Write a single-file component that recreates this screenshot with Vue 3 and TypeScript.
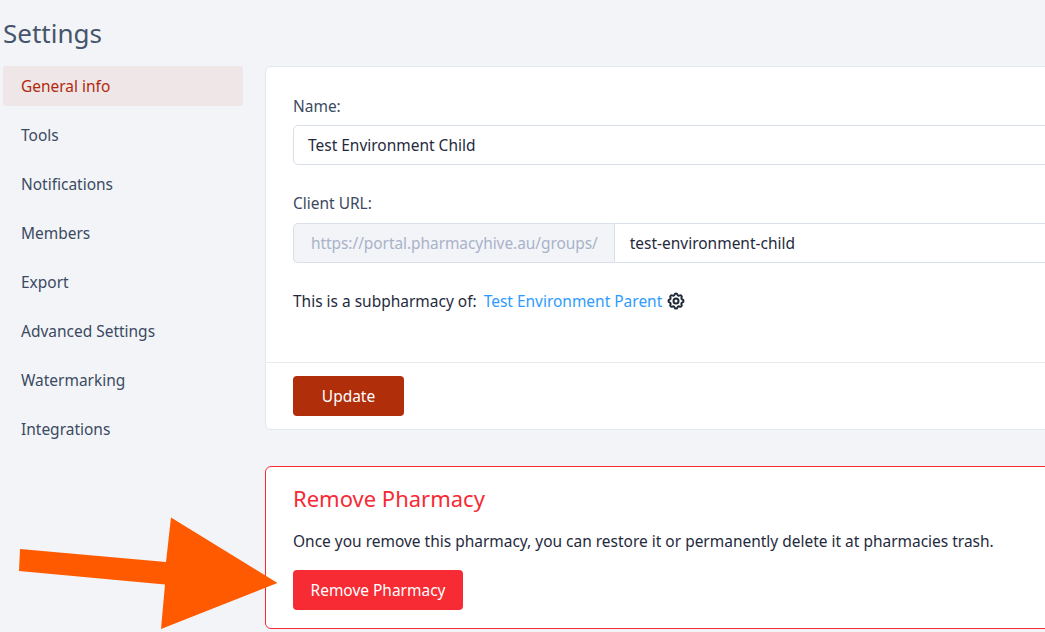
<template>
  <div class="page">
    <h1 class="title">Settings</h1>
    <div class="layout">
      <nav class="side">
        <a
          v-for="item in menu"
          :key="item"
          class="side-item"
          :class="{ active: item === current }"
        >{{ item }}</a>
      </nav>
      <main class="content">
        <section class="card">
          <div class="card-body">
            <label class="label">Name:</label>
            <div class="input">Test Environment Child</div>
            <label class="label label-url">Client URL:</label>
            <div class="group">
              <span class="prefix">https://portal.pharmacyhive.au/groups/</span>
              <div class="input input-joined">test-environment-child</div>
            </div>
            <p class="sub">
              This is a subpharmacy of:
              <a class="link">Test Environment Parent</a>
              <svg class="gear" viewBox="0 0 24 24" fill="none" stroke="#1f2937" stroke-width="2.4" stroke-linecap="round" stroke-linejoin="round">
                <path d="M10.3 4.3c.4-1.8 3-1.8 3.4 0a1.7 1.7 0 0 0 2.6 1.1c1.5-.9 3.3.8 2.4 2.4a1.7 1.7 0 0 0 1 2.5c1.8.4 1.8 3 0 3.4a1.7 1.7 0 0 0-1 2.6c.9 1.5-.9 3.3-2.4 2.4a1.7 1.7 0 0 0-2.6 1c-.4 1.8-3 1.8-3.4 0a1.7 1.7 0 0 0-2.6-1c-1.5.9-3.3-.9-2.4-2.4a1.7 1.7 0 0 0-1-2.6c-1.8-.4-1.8-3 0-3.4a1.7 1.7 0 0 0 1-2.5c-.9-1.6.9-3.3 2.4-2.4a1.7 1.7 0 0 0 2.6-1.1z" />
                <circle cx="12" cy="12" r="3" />
              </svg>
            </p>
          </div>
          <div class="card-foot">
            <button class="btn btn-update">Update</button>
          </div>
        </section>
        <section class="card card-danger">
          <h2 class="danger-title">Remove Pharmacy</h2>
          <p class="danger-text">Once you remove this pharmacy, you can restore it or permanently delete it at pharmacies trash.</p>
          <button class="btn btn-remove">Remove Pharmacy</button>
        </section>
      </main>
    </div>
    <!-- annotation drawn on top of the screenshot -->
    <svg class="arrow" width="1045" height="632" viewBox="0 0 1045 632">
      <polygon points="20,549 166,562 171,517.5 277.5,583 161,629 165,584.5 19,571" fill="#ff5a00" />
    </svg>
  </div>
</template>

<script setup lang="ts">
const menu: string[] = [
  'General info',
  'Tools',
  'Notifications',
  'Members',
  'Export',
  'Advanced Settings',
  'Watermarking',
  'Integrations',
]
const current = 'General info'
</script>

<style>
html,
body {
  margin: 0;
  background: #f2f4f8;
  overflow: hidden;
}
</style>

<style scoped>
.page {
  position: relative;
  width: 1045px;
  height: 632px;
  overflow: hidden;
  padding: 15px 0 0 3px;
  box-sizing: border-box;
  background: #f2f4f8;
  font-family: 'Noto Sans', sans-serif;
  font-size: 15.47px;
  color: #2d3a53;
}

.title {
  margin: 0 0 14px;
  font-size: 26px;
  font-weight: 400;
  line-height: 37px;
  color: #46556c;
}

.layout {
  display: flex;
  gap: 22px;
  align-items: flex-start;
}

.side {
  width: 240px;
  flex: none;
  display: flex;
  flex-direction: column;
  gap: 9px;
}

.side-item {
  height: 40px;
  line-height: 40px;
  padding-left: 18px;
  border-radius: 3px;
  color: #3b4a61;
}

.side-item.active {
  background: #eee6e7;
  color: #b12a0d;
}

.content {
  width: 1000px;
  flex: none;
}

.card {
  background: #fff;
  border: 1px solid #e4e7f0;
  border-radius: 6px;
}

.card-body {
  padding: 27px 27px 0;
  height: 295px;
  box-sizing: border-box;
}

.label {
  display: block;
  line-height: 24px;
  margin-bottom: 7px;
  color: #3b4a61;
}

.label-url {
  margin-top: 26px;
  margin-bottom: 8px;
}

.input {
  height: 40px;
  line-height: 38px;
  box-sizing: border-box;
  padding: 0 14px;
  background: #fff;
  border: 1px solid #d9deeb;
  border-radius: 5px;
  color: #1f2a3d;
}

.group {
  display: flex;
}

.prefix {
  height: 40px;
  line-height: 38px;
  box-sizing: border-box;
  padding: 0 16px 0 17px;
  background: #f2f4f8;
  border: 1px solid #d9deeb;
  border-right: 0;
  border-radius: 5px 0 0 5px;
  color: #a9b2c8;
  white-space: nowrap;
  letter-spacing: -0.06px;
}

.input-joined {
  flex: 1;
  padding: 0 15px;
  border-radius: 0 5px 5px 0;
}

.sub {
  display: flex;
  align-items: center;
  margin: 26px 0 0;
  line-height: 24px;
  color: #1f2a3d;
}

.link {
  margin-left: 7px;
  color: #2e9bff;
}

.gear {
  width: 20px;
  height: 20px;
  margin-left: 4px;
}

.card-foot {
  border-top: 1px solid #e9ebf1;
  padding: 13px 27px;
}

.btn {
  display: block;
  height: 40px;
  border: 0;
  border-radius: 4px;
  color: #fff;
  font-family: inherit;
  font-size: 15.47px;
}

.btn-update {
  width: 111px;
  background: #b12e0b;
}

.card-danger {
  margin-top: 36px;
  height: 163px;
  box-sizing: border-box;
  padding: 16px 27px 0;
  border-color: #f62b33;
}

.danger-title {
  margin: 0;
  font-size: 22px;
  font-weight: 400;
  line-height: 30px;
  color: #f62b33;
}

.danger-text {
  margin: 16px 0 0;
  line-height: 24px;
  color: #1f2a3d;
}

.btn-remove {
  width: 170px;
  margin-top: 17px;
  background: #f62b33;
}

.arrow {
  position: absolute;
  left: 0;
  top: 0;
  pointer-events: none;
}
</style>
